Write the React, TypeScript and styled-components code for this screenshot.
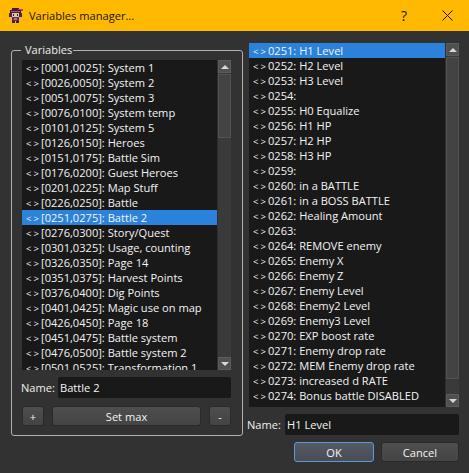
import React from "react";
import styled, { createGlobalStyle } from "styled-components";

const Global = createGlobalStyle`
  html, body { margin: 0; padding: 0; background: #323232; }
  * { box-sizing: border-box; }
`;

const Window = styled.div`
  width: 469px;
  height: 473px;
  background: #323232;
  color: #f0f0f0;
  font-family: "Open Sans", "Liberation Sans", sans-serif;
  font-size: 11.1px;
  display: flex;
  flex-direction: column;
  overflow: hidden;
`;

const TitleBar = styled.div`
  height: 31px;
  flex: none;
  background: #ffb900;
  color: #1d1400;
  display: flex;
  align-items: center;
  padding-left: 9px;
`;

const TitleText = styled.span`
  margin-left: 6px;
  flex: 1;
`;

const HelpGlyph = styled.span`
  font-size: 14px;
  width: 14px;
  text-align: center;
  margin-right: 31px;
`;

const CloseIcon = styled.svg`
  width: 11px;
  height: 11px;
  margin-right: 16px;
`;

const Content = styled.div`
  flex: 1;
  display: grid;
  grid-template-columns: 232px 210px;
  column-gap: 6px;
  padding: 12px 10px 0 11px;
  align-content: start;
`;

const GroupBox = styled.fieldset`
  margin: 0;
  padding: 3px 11px 0 10px;
  height: 393px;
  border: 1px solid #b0b0b0;
  border-radius: 3px;
  min-width: 0;
`;

const GroupLegend = styled.legend`
  padding: 0 4px;
  margin-left: -1px;
  width: 52px;
  line-height: 14px;
  height: 14px;
  color: #eeeeee;
`;

const ListFrame = styled.div<{ $h: number }>`
  display: flex;
  height: ${(p) => p.$h}px;
  background: #2e2e2e;
  overflow: hidden;
`;

const Rows = styled.div`
  flex: 1;
  min-width: 0;
  overflow: hidden;
  background: #191919;
`;

const Row = styled.div<{ $selected?: boolean }>`
  height: 15px;
  line-height: 15px;
  padding-left: 4px;
  white-space: pre;
  background: ${(p) => (p.$selected ? "#2a82da" : "transparent")};
  color: #f4f4f4;
`;

const Marker = styled.span`
  display: inline-block;
  width: 15px;
  font-size: 9.5px;
  letter-spacing: 2px;
`;

const Bar = styled.div`
  flex: none;
  width: 13px;
  margin-left: 1px;
  background: #3a3a3a;
  display: flex;
  flex-direction: column;
`;

const BarButton = styled.div`
  height: 13px;
  flex: none;
  background: #505050;
  border: 1px solid #5c5c5c;
  display: flex;
  align-items: center;
  justify-content: center;
`;

const Thumb = styled.div<{ $h: number }>`
  height: ${(p) => p.$h}px;
  flex: none;
  margin-top: 1px;
  background: #434343;
  border: 1px solid #525252;
`;

const Track = styled.div`
  flex: 1;
`;

const Arrow = styled.div<{ $down?: boolean }>`
  width: 0;
  height: 0;
  border-left: 4px solid transparent;
  border-right: 4px solid transparent;
  ${(p) =>
    p.$down
      ? "border-top: 4px solid #d8d8d8;"
      : "border-bottom: 4px solid #d8d8d8;"}
`;

const NameRow = styled.div<{ $labelWidth: number; $inset: number }>`
  display: flex;
  align-items: center;
  margin-top: 7px;
  margin-left: -${(p) => p.$inset}px;
  & > span {
    width: ${(p) => p.$labelWidth}px;
    flex: none;
  }
`;

const NameLabel = styled.span`
  color: #eeeeee;
`;

const NameInput = styled.div`
  flex: 1;
  height: 21px;
  line-height: 21px;
  background: #191919;
  border-radius: 2px;
  padding-left: 2px;
  color: #f4f4f4;
`;

const ButtonRow = styled.div`
  display: flex;
  gap: 8px;
  margin-top: 8px;
`;

const Button = styled.div<{ $w?: number; $default?: boolean }>`
  ${(p) => (p.$w ? `width: ${p.$w}px; flex: none;` : "flex: 1;")}
  height: 20px;
  display: flex;
  align-items: center;
  justify-content: center;
  border-radius: 3px;
  color: #f4f4f4;
  background: ${(p) =>
    p.$default
      ? "linear-gradient(#555b63, #484d54)"
      : "linear-gradient(#4e4e4e, #444444)"};
  border: 1px solid ${(p) => (p.$default ? "#5b9ad8" : "#2a2a2a")};
`;

const RightColumn = styled.div`
  display: flex;
  flex-direction: column;
  min-width: 0;
  width: 210px;
`;

const Footer = styled.div`
  grid-column: 1 / -1;
  display: flex;
  justify-content: flex-end;
  gap: 7px;
  margin-top: 6px;
`;

const left = [
  "[0001,0025]: System 1",
  "[0026,0050]: System 2",
  "[0051,0075]: System 3",
  "[0076,0100]: System temp",
  "[0101,0125]: System 5",
  "[0126,0150]: Heroes",
  "[0151,0175]: Battle Sim",
  "[0176,0200]: Guest Heroes",
  "[0201,0225]: Map Stuff",
  "[0226,0250]: Battle",
  "[0251,0275]: Battle 2",
  "[0276,0300]: Story/Quest",
  "[0301,0325]: Usage, counting",
  "[0326,0350]: Page 14",
  "[0351,0375]: Harvest Points",
  "[0376,0400]: Dig Points",
  "[0401,0425]: Magic use on map",
  "[0426,0450]: Page 18",
  "[0451,0475]: Battle system",
  "[0476,0500]: Battle system 2",
  "[0501,0525]: Transformation 1",
];

const right = [
  "0251: H1 Level",
  "0252: H2 Level",
  "0253: H3 Level",
  "0254:",
  "0255: H0 Equalize",
  "0256: H1 HP",
  "0257: H2 HP",
  "0258: H3 HP",
  "0259:",
  "0260: in a BATTLE",
  "0261: in a BOSS BATTLE",
  "0262: Healing Amount",
  "0263:",
  "0264: REMOVE enemy",
  "0265: Enemy X",
  "0266: Enemy Z",
  "0267: Enemy Level",
  "0268: Enemy2 Level",
  "0269: Enemy3 Level",
  "0270: EXP boost rate",
  "0271: Enemy drop rate",
  "0272: MEM Enemy drop rate",
  "0273: increased d RATE",
  "0274: Bonus battle DISABLED",
  "0275: BRI :",
];

const Mascot = () => (
  <svg width="14" height="15" viewBox="0 0 14 15" shapeRendering="crispEdges">
    <rect x="3" y="0" width="7" height="2" fill="#3a2230" />
    <rect x="9" y="1" width="5" height="2" fill="#c23a5a" />
    <rect x="1" y="2" width="11" height="3" fill="#3a2230" />
    <rect x="2" y="3" width="9" height="1" fill="#d8446a" />
    <rect x="0" y="5" width="13" height="4" fill="#4a2a3a" />
    <rect x="3" y="5" width="7" height="4" fill="#f0c0a8" />
    <rect x="4" y="6" width="1" height="2" fill="#2a1a24" />
    <rect x="8" y="6" width="1" height="2" fill="#2a1a24" />
    <rect x="3" y="9" width="7" height="4" fill="#5a3048" />
    <rect x="1" y="9" width="2" height="3" fill="#e8a898" />
    <rect x="10" y="9" width="2" height="3" fill="#e8a898" />
    <rect x="5" y="10" width="3" height="2" fill="#d06a80" />
    <rect x="3" y="13" width="3" height="2" fill="#3a2230" />
    <rect x="7" y="13" width="3" height="2" fill="#3a2230" />
  </svg>
);

const ScrollBar = ({ thumb }: { thumb: number }) => (
  <Bar>
    <BarButton>
      <Arrow />
    </BarButton>
    <Thumb $h={thumb} />
    <Track />
    <BarButton>
      <Arrow $down />
    </BarButton>
  </Bar>
);

export default function App() {
  return (
    <Window>
      <Global />
      <TitleBar>
        <Mascot />
        <TitleText>Variables manager...</TitleText>
        <HelpGlyph>?</HelpGlyph>
        <CloseIcon viewBox="0 0 11 11">
          <path d="M0.5 0.5 L10.5 10.5 M10.5 0.5 L0.5 10.5" stroke="#1d1400" strokeWidth="1" fill="none" />
        </CloseIcon>
      </TitleBar>
      <Content>
        <GroupBox>
          <GroupLegend>Variables</GroupLegend>
          <ListFrame $h={310}>
            <Rows>
              {left.map((t) => (
                <Row key={t} $selected={t.startsWith("[0251")}>
                  <Marker>{"<>"}</Marker>
                  {t}
                </Row>
              ))}
            </Rows>
            <ScrollBar thumb={64} />
          </ListFrame>
          <NameRow $labelWidth={37} $inset={1}>
            <NameLabel>Name:</NameLabel>
            <NameInput>Battle 2</NameInput>
          </NameRow>
          <ButtonRow>
            <Button $w={22}>+</Button>
            <Button>Set max</Button>
            <Button $w={22}>-</Button>
          </ButtonRow>
        </GroupBox>
        <RightColumn>
          <ListFrame $h={364}>
            <Rows>
              {right.map((t, i) => (
                <Row key={t} $selected={i === 0}>
                  <Marker>{"<>"}</Marker>
                  {t}
                </Row>
              ))}
            </Rows>
            <ScrollBar thumb={322} />
          </ListFrame>
          <NameRow $labelWidth={38} $inset={2}>
            <NameLabel>Name:</NameLabel>
            <NameInput>H1 Level</NameInput>
          </NameRow>
        </RightColumn>
        <Footer>
          <Button $w={80} $default>OK</Button>
          <Button $w={78}>Cancel</Button>
        </Footer>
      </Content>
    </Window>
  );
}
